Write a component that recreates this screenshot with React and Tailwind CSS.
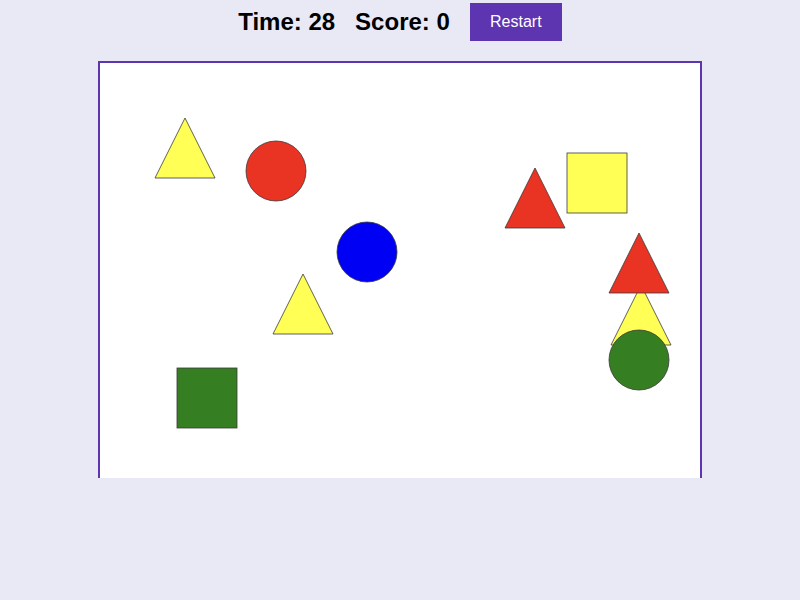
import React from 'react'

const YELLOW = '#ffff55'
const RED = '#e93323'
const BLUE = '#0000f5'
const GREEN = '#367e22'
const STROKE = '#3a3a3a'

// shapes in board coords (board inner origin is page 100,63), draw order matters
// circles use centre, squares/triangles use top-left of their 60px box
const shapes = [
  { kind: 'tri', x: 55, y: 55, fill: YELLOW },
  { kind: 'circle', x: 176, y: 108, fill: RED },
  { kind: 'circle', x: 267, y: 189, fill: BLUE },
  { kind: 'tri', x: 173, y: 211, fill: YELLOW },
  { kind: 'square', x: 77, y: 305, fill: GREEN },
  { kind: 'tri', x: 405, y: 105, fill: RED },
  { kind: 'square', x: 467, y: 90, fill: YELLOW },
  { kind: 'tri', x: 511, y: 222, fill: YELLOW },
  { kind: 'tri', x: 509, y: 170, fill: RED },
  { kind: 'circle', x: 539, y: 297, fill: GREEN },
]

function Shape({ s }) {
  const common = { fill: s.fill, stroke: STROKE, strokeWidth: 0.8 }
  if (s.kind === 'circle') return <circle cx={s.x} cy={s.y} r={30} {...common} />
  if (s.kind === 'square') return <rect x={s.x} y={s.y} width={60} height={60} {...common} />
  return (
    <polygon
      points={`${s.x + 30},${s.y} ${s.x + 60},${s.y + 60} ${s.x},${s.y + 60}`}
      {...common}
    />
  )
}

export default function App() {
  return (
    <div className="min-h-screen w-full bg-[#e9e8f5] font-['Liberation_Sans',Arial,sans-serif]">
      <div className="flex items-center justify-center gap-5 pt-[3px]">
        <div className="flex gap-5 text-[24px] font-bold text-black">
          <span>Time: 28</span>
          <span>Score: 0</span>
        </div>
        <button className="h-[38px] w-[92px] bg-[#5e35b1] text-[16px] text-white">Restart</button>
      </div>
      <div className="mx-auto mt-5 h-[417px] w-[604px] overflow-hidden">
        <div className="h-[604px] w-[604px] border-2 border-[#5e35b1] bg-white">
          <svg width="600" height="600" viewBox="0 0 600 600">
            {shapes.map((s, i) => (
              <Shape key={i} s={s} />
            ))}
          </svg>
        </div>
      </div>
    </div>
  )
}
